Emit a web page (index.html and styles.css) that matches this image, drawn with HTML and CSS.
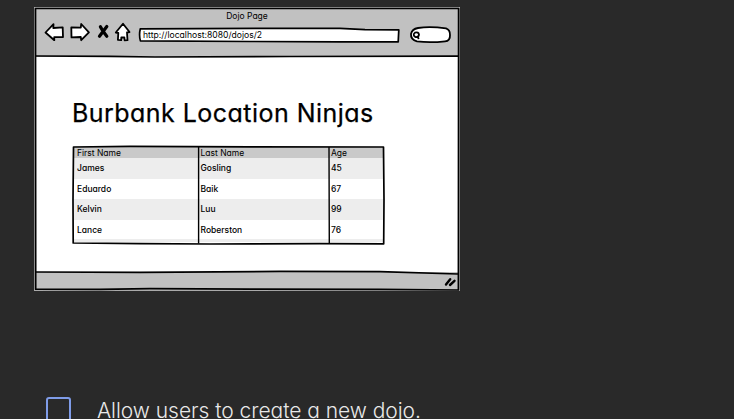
FILE: index.html
```
<!DOCTYPE html>
<html lang="en">
<head>
<meta charset="utf-8">
<title>Dojo Page</title>
<link rel="stylesheet" href="styles.css">
</head>
<body>
<main class="lesson">
  <section class="mockup">
    <header class="chrome">
      <div class="chrome-title">Dojo Page</div>
      <div class="toolbar">
        <svg class="nav-icons" width="88" height="22" viewBox="44 21 88 22">
          <g fill="#fff" stroke="#000" stroke-width="1.8" stroke-linejoin="round" stroke-linecap="round">
            <path d="M45.5 32.5 53.5 24.2 53.3 28 62.7 27.4 63 37 54.2 37.1 54.3 40.2Z"/>
            <path d="M71.3 27.5 80.8 27.6 81.2 24 88.9 32.4 81.2 40.2 80.8 37 71.5 37.4Z"/>
            <path d="M123 23.8 129.5 32 127 32.5 127.5 40.2 124.6 40.3 124.4 37.5 121.3 37.5 121.2 40.2 117.9 39.9 118.3 33 115.8 32.5Z"/>
          </g>
          <path d="M100.4 26.7Q102.5 31 106.8 36.2M106.8 26.5 99.5 36.3" fill="none" stroke="#000" stroke-width="3.2" stroke-linecap="round"/>
        </svg>
        <div class="address">
          <svg class="outline" width="262" height="16" viewBox="138 27 262 16"><path d="M140.3 28.8 260 28.4 340 28.4 365 29.6 398.8 29.9 398.2 41.9 340 41.8 250 41.5 140.4 40.9Q138.8 35 140.3 28.8Z"/></svg>
          <span class="url">http://localhost:8080/dojos/2</span>
        </div>
        <svg class="search" width="44" height="20" viewBox="409 25 44 20">
          <path d="M418 28Q430 26.2 446 28.4 450.2 30 450 35 450.3 41 445 41.3 430 43 417 41.4 410.5 39.5 411 34 412 29 418 28Z" fill="#fff" stroke="#000" stroke-width="1.8"/>
          <path d="M415 32.6Q418.6 31.6 419 34.6 418.6 37.4 415.4 37 412.2 34.8 415 32.6ZM417.6 36.6 418.8 39" fill="none" stroke="#000" stroke-width="1.8"/>
        </svg>
      </div>
    </header>
    <div class="page">
      <h1>Burbank Location Ninjas</h1>
      <div class="table-wrap">
        <table>
          <thead><tr><th>First Name</th><th>Last Name</th><th>Age</th></tr></thead>
          <tbody>
            <tr><td>James</td><td>Gosling</td><td>45</td></tr>
            <tr><td>Eduardo</td><td>Baik</td><td>67</td></tr>
            <tr><td>Kelvin</td><td>Luu</td><td>99</td></tr>
            <tr class="last"><td>Lance</td><td>Roberston</td><td>76</td></tr>
          </tbody>
        </table>
        <svg class="sketch" width="313" height="100" viewBox="72 145 313 100">
          <path d="M73.5 147 130 146.4 250 146.8 383.5 147 384 200 383.7 243.8 320 243.7 210 244 140 243.6 73.2 243 73 200Z" stroke-width="1.7"/>
          <path d="M198.6 147V243.5M329 147 329.3 243.5" stroke-width="1.4"/>
        </svg>
      </div>
    </div>
    <footer class="status"></footer>
    <svg class="sketch" width="426" height="284" viewBox="34 7 426 284">
      <path d="M35.5 8.5H458.6L458.4 290 380 289.4 250 289.2 150 288.6 100 289.4 35.7 289.2Z" stroke-width="1.7"/>
      <path d="M36 56 110 56.3 155 57 290 56.5 458 56.1M36 272 140 272.4 280 271.4 380 271.6 458 274" stroke-width="1.7"/>
      <path d="M446 284.5 450.2 279.2M450 285 454.5 280.8" stroke-width="2.4" stroke-linecap="round"/>
    </svg>
  </section>
  <label class="task"><span class="box"></span><span class="task-text">Allow users to create a new dojo.</span></label>
</main>
</body>
</html>
```

FILE: styles.css
```
* { box-sizing: border-box; }
body {
  margin: 0;
  height: 419px;
  overflow: hidden;
  background: #292929;
  font-family: Inter, "Liberation Sans", sans-serif;
  font-feature-settings: "cv11";
}
.lesson { padding: 7px 0 0 34px; }
.mockup {
  position: relative;
  display: flex;
  flex-direction: column;
  width: 426px;
  height: 284px;
  border: 1px solid #aaa;
  background: #fff;
  color: #000;
}
.chrome { height: 49px; background: #c1c1c1; }
.chrome-title {
  height: 16px;
  line-height: 16px;
  text-align: center;
  font-size: 8.5px;
}
.toolbar { display: flex; align-items: flex-start; padding-left: 9px; }
.nav-icons { margin-top: -3px; }
.address { position: relative; width: 262px; height: 16px; margin: 3px 0 0 6px; }
.outline { position: absolute; inset: 0; fill: #fff; stroke: #000; stroke-width: 1.7; stroke-linejoin: round; }
.url { position: relative; display: block; padding-left: 5px; font-size: 8.6px; line-height: 16px; white-space: nowrap; }
.search { margin: 1px 0 0 9px; }
.page { height: 215px; padding: 40px 0 0 37px; }
h1 {
  margin: 0;
  height: 33px;
  line-height: 32px;
  font-size: 25px;
  font-weight: 400;
  letter-spacing: 0.46px;
  white-space: nowrap;
  -webkit-text-stroke: 0.25px #000;
}
.table-wrap { position: relative; width: 313px; height: 100px; margin-top: 15px; padding: 2px 1px 1px 1px; }
table { width: 311px; table-layout: fixed; border-collapse: collapse; background: #ededed; font-size: 8.5px; }
thead tr { height: 11px; background: #c9c9c9; }
tbody tr { height: 20.5px; }
tbody tr:nth-child(even) { background: #fff; }
tbody { border-bottom: 3px solid #ededed; }
th, td { padding: 0 0 0 2px; line-height: 10px; font-weight: 500; text-align: left; white-space: nowrap; }
th { font-weight: 400; }
th:first-child, td:first-child { width: 125.5px; padding-left: 4px; }
th:nth-child(2), td:nth-child(2) { width: 130.5px; }
.last td { padding-top: 2px; }
.sketch { position: absolute; top: 0; left: 0; fill: none; stroke: #000; stroke-linejoin: round; }
.mockup > .sketch { top: -1px; left: -1px; }
.status { flex: 1; background: #c1c1c1; }
.task { display: flex; align-items: flex-start; margin: 106px 0 0 12px; color: #e8e8e8; }
.box { width: 25px; height: 26px; border: 2px solid #7f9ce8; border-radius: 3px; }
.task-text { margin-left: 26px; line-height: 27px; font-size: 21px; font-weight: 300; letter-spacing: -0.04px; white-space: nowrap; }
```
